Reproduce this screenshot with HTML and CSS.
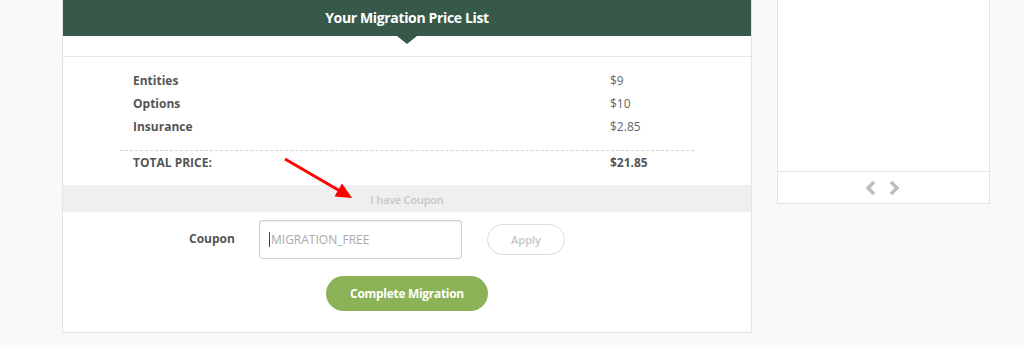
FILE: index.html
```html
<!DOCTYPE html>
<html lang="en">
<head>
<meta charset="utf-8">
<title>Your Migration Price List</title>
<link rel="stylesheet" href="styles.css">
</head>
<body>
<div class="page">
  <section class="card">
    <header class="card-head">Your Migration Price List</header>
    <div class="head-gap"></div>
    <div class="prices">
      <div class="row"><span class="label">Entities</span><span class="value">$9</span></div>
      <div class="row"><span class="label">Options</span><span class="value">$10</span></div>
      <div class="row"><span class="label">Insurance</span><span class="value">$2.85</span></div>
      <div class="row total"><span class="label">TOTAL PRICE:</span><span class="value">$21.85</span></div>
    </div>
    <div class="coupon-bar">I have Coupon</div>
    <div class="coupon-row">
      <label class="coupon-label" for="coupon">Coupon</label>
      <div class="coupon-input"><span class="caret"></span><span class="placeholder">MIGRATION_FREE</span></div>
      <button class="apply" type="button">Apply</button>
    </div>
    <div class="complete-wrap">
      <button class="complete" type="button">Complete Migration</button>
    </div>
    <svg class="arrow" width="80" height="50" viewBox="280 155 80 50" aria-hidden="true">
      <line x1="285" y1="159" x2="340" y2="191" stroke="#ff0000" stroke-width="3"/>
      <polygon points="352,198 334.5,196.5 342,183.5" fill="#ff0000"/>
    </svg>
  </section>
  <aside class="side">
    <div class="side-body"></div>
    <div class="side-foot">
      <svg width="12" height="16" viewBox="0 0 12 16" aria-hidden="true"><polyline points="9,2 3,8 9,14" fill="none" stroke="#bdbdbd" stroke-width="3.5"/></svg>
      <svg width="12" height="16" viewBox="0 0 12 16" aria-hidden="true"><polyline points="3,2 9,8 3,14" fill="none" stroke="#bdbdbd" stroke-width="3.5"/></svg>
    </div>
  </aside>
</div>
</body>
</html>
```

FILE: styles.css
```css
html, body {
  margin: 0;
  padding: 0;
  background: #f9f9f9;
  font-family: "Open Sans", "Liberation Sans", sans-serif;
}

.page {
  display: flex;
  align-items: flex-start;
  gap: 25px;
  padding-left: 62px;
}

.card {
  position: relative;
  width: 688px;
  background: #fff;
  border: 1px solid #e4e4e4;
  border-top: none;
}

.card-head {
  position: relative;
  height: 36px;
  line-height: 36px;
  background: #37594a;
  color: #fff;
  font-weight: 700;
  font-size: 14px;
  text-align: center;
  letter-spacing: -0.35px;
}

.card-head::after {
  content: "";
  position: absolute;
  left: 50%;
  top: 36px;
  margin-left: -10px;
  border-left: 10px solid transparent;
  border-right: 10px solid transparent;
  border-top: 8px solid #37594a;
}

.head-gap {
  height: 20px;
  border-bottom: 1px solid #e8e8e8;
}

.prices {
  margin: 0 57px;
  padding-top: 12px;
}

.row {
  display: grid;
  grid-template-columns: 477px auto;
  padding: 0 13px;
  height: 23px;
  line-height: 23px;
  font-size: 12px;
}

.label {
  font-weight: 700;
  color: #555;
}

.value {
  color: #666;
}

.row.total {
  margin-top: 12px;
  border-top: 1px dashed #d4d4d4;
  height: 23px;
}

.row.total .label {
  text-transform: uppercase;
}

.row.total .value {
  font-weight: 700;
  color: #555;
}

.coupon-bar {
  margin-top: 11px;
  height: 27px;
  line-height: 29px;
  background: #efefef;
  color: #c6c6c6;
  font-size: 11px;
  font-weight: 600;
  text-align: center;
  letter-spacing: -0.2px;
}

.coupon-row {
  display: flex;
  align-items: center;
  padding: 8px 0 0 126px;
}

.coupon-label {
  width: 70px;
  font-weight: 700;
  font-size: 12px;
  color: #555;
  margin-top: -2px;
}

.coupon-input {
  display: flex;
  align-items: center;
  box-sizing: border-box;
  width: 203px;
  height: 39px;
  border: 1px solid #cfcfcf;
  border-radius: 3px;
  box-shadow: inset 0 1px 2px rgba(0,0,0,0.08);
  padding-left: 9px;
  font-size: 12px;
  color: #aaa;
}

.caret {
  width: 1px;
  height: 15px;
  background: #444;
  margin-right: 1px;
}

.apply {
  box-sizing: border-box;
  margin-left: 25px;
  width: 78px;
  height: 31px;
  border: 1px solid #dcdcdc;
  border-radius: 16px;
  background: #fff;
  color: #c6c6c6;
  font-family: inherit;
  font-size: 11px;
  font-weight: 600;
  padding: 0;
}

.complete-wrap {
  display: flex;
  justify-content: center;
  padding: 17px 0 21px;
}

.complete {
  width: 162px;
  height: 35px;
  border: none;
  border-radius: 18px;
  background: #8cb257;
  color: #fff;
  font-family: inherit;
  font-weight: 700;
  font-size: 12px;
  letter-spacing: -0.3px;
  padding: 0;
}

.arrow {
  position: absolute;
  left: 217px;
  top: 155px;
}

.side {
  width: 211px;
  background: #fff;
  border: 1px solid #e4e4e4;
  border-top: none;
}

.side-body {
  height: 171px;
  border-bottom: 1px solid #e4e4e4;
}

.side-foot {
  height: 31px;
  display: flex;
  justify-content: center;
  align-items: center;
  gap: 11px;
  padding-right: 2px;
}
```
